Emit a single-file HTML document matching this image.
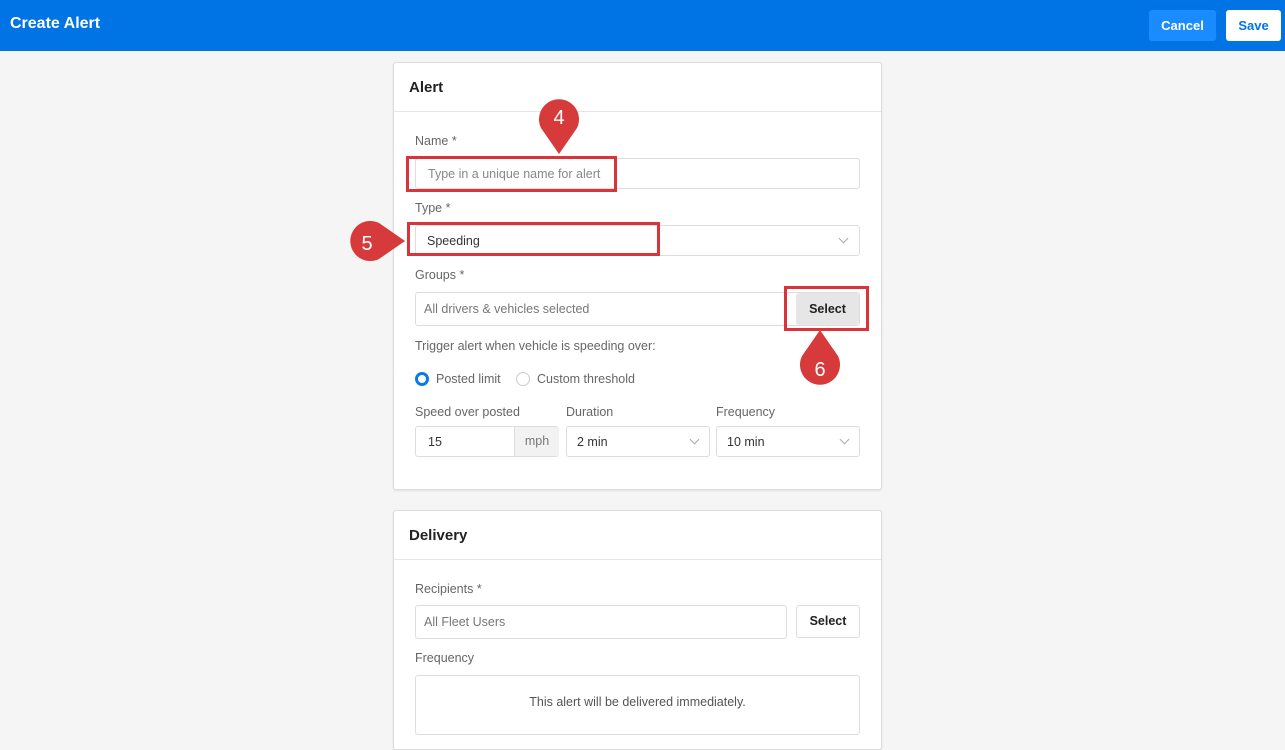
<!DOCTYPE html>
<html><head><style>
*{box-sizing:border-box;margin:0;padding:0}
body{width:1285px;height:727px;overflow:hidden;background:#f5f5f5;font-family:"Liberation Sans",sans-serif;position:relative;color:#333}
.hdr{position:absolute;left:0;top:0;width:1285px;height:51px;background:#0074e4}
.hdr h1{position:absolute;left:10px;top:15px;color:#fff;font-size:16px;font-weight:bold}
.btn{position:absolute;top:10px;height:31px;border-radius:3px;font-size:13px;font-weight:bold;text-align:center;line-height:31px}
.card{position:absolute;left:393px;width:489px;background:#fff;border:1px solid #ddd;border-radius:3px;box-shadow:0 1px 2px rgba(0,0,0,.08)}
.ct{height:49px;border-bottom:1px solid #e6e6e6;padding:16px 0 0 15px;font-size:15px;font-weight:bold;color:#222}
.a{position:absolute;font-size:12.5px;color:#666}
.in{position:absolute;border:1px solid #ddd;border-radius:3px;background:#fff;font-size:12.5px;color:#333}
.chev{position:absolute;width:7px;height:7px;border-right:1px solid #aaa;border-bottom:1px solid #aaa;transform:rotate(45deg)}
.red{position:absolute;border:3px solid #d9343a}
</style></head><body>
<div class="hdr"><h1>Create Alert</h1>
<div class="btn" style="left:1149px;width:67px;background:#1a8cff;color:#fff">Cancel</div>
<div class="btn" style="left:1226px;width:55px;background:#fff;color:#0074e4">Save</div></div>

<div class="card" style="top:62px;height:428px"><div class="ct">Alert</div></div>
<div class="a" style="left:415px;top:134px">Name *</div>
<div class="in" style="left:415px;top:158px;width:445px;height:31px;padding:8px 12px;color:#888">Type in a unique name for alert</div>
<div class="a" style="left:415px;top:201px">Type *</div>
<div class="in" style="left:415px;top:225px;width:445px;height:31px;padding:8px 11px">Speeding<div class="chev" style="left:424px;top:9px"></div></div>
<div class="a" style="left:415px;top:268px">Groups *</div>
<div class="in" style="left:415px;top:292px;width:445px;height:34px;padding:9px 8px;color:#777">All drivers &amp; vehicles selected</div>
<div style="position:absolute;left:796px;top:293px;width:63px;height:32px;background:#e6e6e6;border-radius:3px;font-size:12.5px;font-weight:bold;text-align:center;line-height:32px;color:#222">Select</div>
<div class="a" style="left:415px;top:339px">Trigger alert when vehicle is speeding over:</div>
<div style="position:absolute;left:415px;top:372px;width:14px;height:14px;border:3px solid #0a7be6;border-radius:50%"></div>
<div class="a" style="left:436px;top:372px">Posted limit</div>
<div style="position:absolute;left:516px;top:372px;width:14px;height:14px;border:1px solid #ccc;border-radius:50%"></div>
<div class="a" style="left:537px;top:372px">Custom threshold</div>
<div class="a" style="left:415px;top:405px">Speed over posted</div>
<div class="a" style="left:566px;top:405px">Duration</div>
<div class="a" style="left:716px;top:405px">Frequency</div>
<div class="in" style="left:415px;top:426px;width:144px;height:31px;padding:8px 12px">15<div style="position:absolute;left:98px;top:0;width:45px;height:29px;background:#f2f2f2;border-left:1px solid #ddd;color:#777;text-align:center;line-height:29px">mph</div></div>
<div class="in" style="left:566px;top:426px;width:144px;height:31px;padding:8px 10px">2 min<div class="chev" style="left:124px;top:9px"></div></div>
<div class="in" style="left:716px;top:426px;width:144px;height:31px;padding:8px 10px">10 min<div class="chev" style="left:124px;top:9px"></div></div>

<div class="card" style="top:510px;height:240px"><div class="ct">Delivery</div></div>
<div class="a" style="left:415px;top:582px">Recipients *</div>
<div class="in" style="left:415px;top:605px;width:372px;height:34px;padding:9px 8px;color:#777">All Fleet Users</div>
<div class="in" style="left:796px;top:605px;width:64px;height:33px;font-weight:bold;text-align:center;line-height:31px;color:#222">Select</div>
<div class="a" style="left:415px;top:651px">Frequency</div>
<div class="in" style="left:415px;top:675px;width:445px;height:60px;text-align:center;padding-top:19px;color:#555">This alert will be delivered immediately.</div>

<div class="red" style="left:406px;top:156px;width:211px;height:36px"></div>
<div class="red" style="left:407px;top:222px;width:253px;height:34px"></div>
<div class="red" style="left:784px;top:286px;width:85px;height:45px"></div>

<svg style="position:absolute;left:0;top:0" width="1285" height="727">
<g fill="#d63a3a">
<path d="M559 154 L541 128 A20 20 0 1 1 577 128 Z"/>
<path d="M405 241 L379 223 A20 20 0 1 0 379 259 Z"/>
<path d="M820 330 L802 356 A20 20 0 1 0 838 356 Z"/>
</g>
<g fill="#fff" font-family="Liberation Sans" font-size="20" text-anchor="middle">
<text x="559" y="124">4</text><text x="367" y="250">5</text><text x="820" y="376">6</text>
</g></svg>
</body></html>
